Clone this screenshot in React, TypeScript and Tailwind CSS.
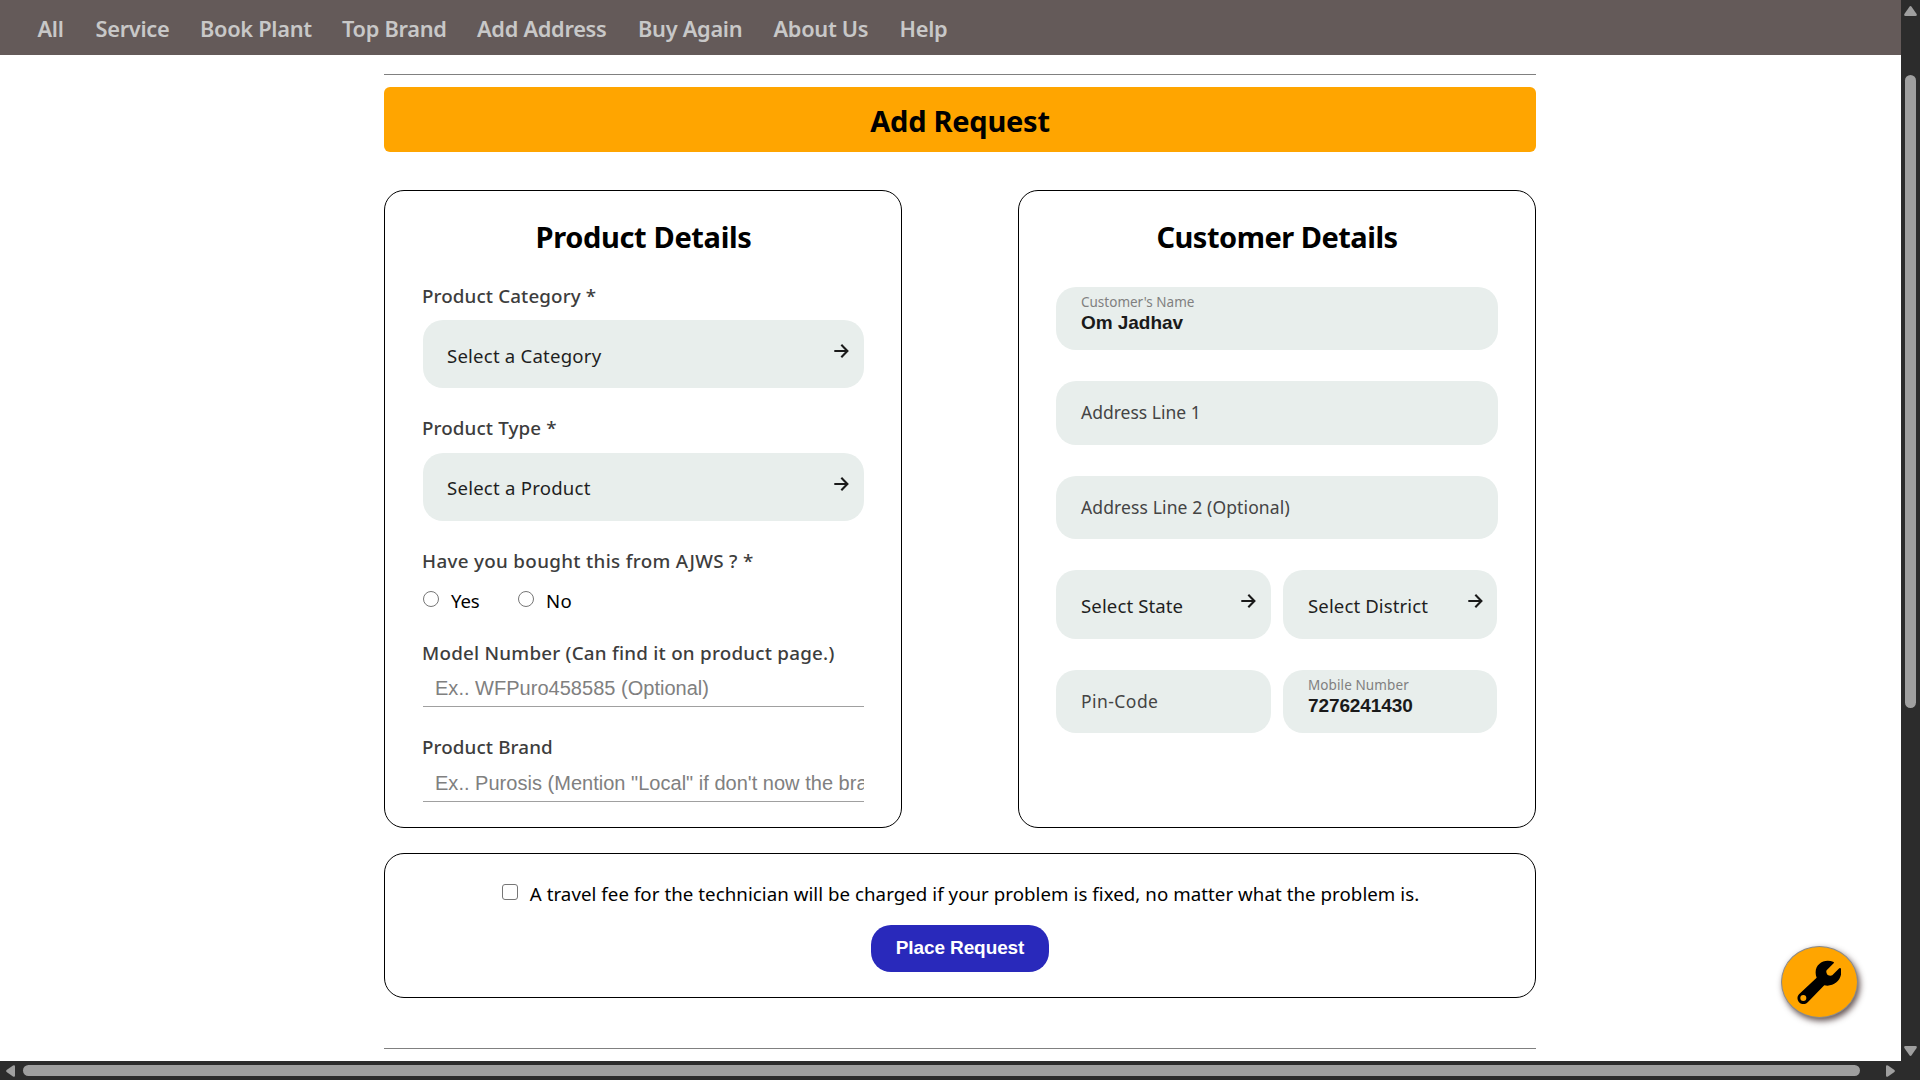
import type { ReactNode } from "react";

const navItems = [
  { label: "All", width: "w-[58px]" },
  { label: "Service", width: "w-[104.5px]" },
  { label: "Book Plant", width: "w-[142px]" },
  { label: "Top Brand", width: "w-[135px]" },
  { label: "Add Address", width: "w-[161px]" },
  { label: "Buy Again", width: "w-[135.5px]" },
  { label: "About Us", width: "w-[126px]" },
  { label: "Help", width: "w-[60px]" },
];

function ArrowRight({ className = "" }: { className?: string }) {
  return (
    <svg className={`h-[14px] w-[15px] shrink-0 ${className}`} viewBox="0 0 15 14" fill="none" stroke="#1a1a1a" strokeWidth="2.1">
      <path d="M0.3 7H13.2M7.3 0.8L13.4 7L7.3 13.2" />
    </svg>
  );
}

function Wrench({ className = "" }: { className?: string }) {
  return (
    <svg className={className} viewBox="80 74 134 134" fill="currentColor" fillRule="evenodd">
      <path d="M190 80C165 68 135 84 136 112Q136 120 139 127L86 177C76 188 83 206 100 207Q108 206 113 200L162 150C190 156 216 135 213 104Q212 96 207 99L186 120Q180 123 172 119Q166 112 169 105L190 84Q192 82 190 80ZM99 179A9 9 0 1 0 99 197A9 9 0 1 0 99 179Z" />
    </svg>
  );
}

function Label({ children, className = "" }: { children: ReactNode; className?: string }) {
  return <div className={`-ml-px h-7 text-[18.8px] leading-7 font-medium whitespace-nowrap text-[#3d3d3d] ${className}`}>{children}</div>;
}

function SelectBox({ children, className = "", textClass = "" }: { children: ReactNode; className?: string; textClass?: string }) {
  return (
    <div className={`flex items-center justify-between rounded-[20px] bg-[#e8eeec] pl-6 ${className}`}>
      <span className={`text-[18.6px] leading-7 whitespace-nowrap text-[#1f1f1f] ${textClass}`}>{children}</span>
      <ArrowRight className="mb-[7px]" />
    </div>
  );
}

function FilledField({ label, value, valueClass, labelClass, className = "" }: { label: string; value: string; valueClass: string; labelClass: string; className?: string }) {
  return (
    <div className={`h-[63px] rounded-[20px] bg-[#e8eeec] pt-1.5 pl-[25px] ${className}`}>
      <div className={`text-[13.5px] leading-[18px] text-[#808080] ${labelClass}`}>{label}</div>
      <div className={`mt-0.5 font-['Liberation_Sans',Arial,sans-serif] text-[19px] leading-5 font-bold text-[#1a1a1a] ${valueClass}`}>{value}</div>
    </div>
  );
}

function EmptyField({ children, className = "" }: { children: ReactNode; className?: string }) {
  return <div className={`flex items-center rounded-[20px] bg-[#e8eeec] pb-[2px] pl-[25px] text-[17.5px] leading-6 text-[#444] ${className}`}>{children}</div>;
}

function LineField({ children, className = "" }: { children: ReactNode; className?: string }) {
  return (
    <div className={`h-[37px] overflow-hidden border-b border-[#a0a0a0] pl-3 font-['Liberation_Sans',Arial,sans-serif] text-[20px] leading-9 whitespace-nowrap text-[#808080] ${className}`}>
      {children}
    </div>
  );
}

function ProductDetails() {
  return (
    <section className="h-[638px] w-[518px] rounded-[20px] border border-black pt-7 pr-[37px] pl-[38px]">
      <h2 className="text-center text-[29px] leading-9 font-bold tracking-[-0.35px]">Product Details</h2>
      <Label className="mt-[27px] tracking-[0.12px]">Product Category *</Label>
      <SelectBox className="mt-2.5 h-[68px] pr-[15px]" textClass="mt-1 tracking-[0.2px]">Select a Category</SelectBox>
      <Label className="mt-[26px] tracking-[0.12px]">Product Type *</Label>
      <SelectBox className="mt-[11px] h-[68px] pr-[15px]" textClass="mt-0.5 tracking-[0.22px]">Select a Product</SelectBox>
      <Label className="mt-[26px] tracking-[0.33px]">Have you bought this from AJWS ? *</Label>
      <div className="mt-3 flex h-7 items-start text-[18.6px] leading-7 tracking-[-0.15px]">
        <span className="mt-1 size-4 rounded-full border border-[#767676]" />
        <span className="ml-3 w-[67px]">Yes</span>
        <span className="mt-1 size-4 rounded-full border border-[#767676]" />
        <span className="ml-3 tracking-[0.3px]">No</span>
      </div>
      <Label className="mt-6 tracking-[0.24px]">Model Number (Can find it on product page.)</Label>
      <LineField className="mt-[3px] tracking-[0.02px]">Ex.. WFPuro458585 (Optional)</LineField>
      <Label className="mt-[26px] tracking-[0.12px]">Product Brand</Label>
      <LineField className="mt-1 tracking-[0.02px]">Ex.. Purosis (Mention &quot;Local&quot; if don&apos;t now the brand)</LineField>
    </section>
  );
}

function CustomerDetails() {
  return (
    <section className="h-[638px] w-[518px] rounded-[20px] border border-black px-[37px] pt-7">
      <h2 className="text-center text-[29px] leading-9 font-bold tracking-[-0.5px]">Customer Details</h2>
      <FilledField className="mt-8" label="Customer's Name" labelClass="" value="Om Jadhav" valueClass="tracking-[-0.05px]" />
      <EmptyField className="mt-[31px] h-16">Address Line 1</EmptyField>
      <EmptyField className="mt-[31px] h-[63px] tracking-[0.12px]">Address Line 2 (Optional)</EmptyField>
      <div className="mt-[31px] flex gap-3">
        <SelectBox className="h-[69px] w-[215px] pr-[15px]" textClass="mt-0.5 ml-px tracking-[0.1px]">Select State</SelectBox>
        <SelectBox className="h-[69px] w-[214px] pr-[14px]" textClass="mt-0.5 ml-px tracking-[0.1px]">Select District</SelectBox>
      </div>
      <div className="mt-[31px] flex gap-3">
        <EmptyField className="h-[63px] w-[215px] tracking-[0.45px]">Pin-Code</EmptyField>
        <FilledField className="w-[214px]" label="Mobile Number" labelClass="tracking-[0.1px]" value="7276241430" valueClass="tracking-[-0.1px]" />
      </div>
    </section>
  );
}

export default function App() {
  return (
    <div className="grid h-[1080px] w-[1920px] grid-cols-[1901px_19px] grid-rows-[1061px_19px] overflow-hidden bg-[#2c2c2c] font-['Noto_Sans','Segoe_UI',sans-serif] text-black">
      <div className="relative overflow-hidden bg-white">
        <nav className="flex h-[55px] items-center bg-[#645a59] pl-[37.5px] text-[21.8px] leading-8 font-semibold tracking-[-0.3px] whitespace-nowrap text-[#c8c8c8]">
          {navItems.map((item) => (
            <a key={item.label} className={`mt-[3px] ${item.width}`}>{item.label}</a>
          ))}
        </nav>
        <main className="ml-[384px] flex w-[1152px] flex-col">
          <hr className="mt-[19px] h-px border-0 bg-[#808080]" />
          <h1 className="mt-3 flex h-[65px] items-center justify-center rounded-[6px] bg-[#ffa500] pt-[2px] text-[29px] leading-9 font-bold tracking-[-0.25px]">Add Request</h1>
          <div className="mt-[38px] flex justify-between">
            <ProductDetails />
            <CustomerDetails />
          </div>
          <section className="mt-[25px] flex h-[145px] flex-col items-center rounded-[20px] border border-black pt-[26px]">
            <div className="ml-px flex h-7 items-start text-[18.7px] leading-7 tracking-[0.05px] whitespace-nowrap">
              <span className="mt-1 mr-3 size-4 rounded-[3px] border border-[#767676]" />
              A travel fee for the technician will be charged if your problem is fixed, no matter what the problem is.
            </div>
            <button className="mt-[17px] h-[47px] w-[178px] rounded-[20px] bg-[#2929bb] pb-[2px] font-['Liberation_Sans',Arial,sans-serif] text-[19px] leading-6 font-bold tracking-[-0.1px] text-white">
              Place Request
            </button>
          </section>
          <hr className="mt-[50px] h-px border-0 bg-[#808080]" />
        </main>
        <button className="absolute top-[946px] left-[1781px] flex h-[72px] w-[77px] items-center justify-center rounded-[50%] border border-[#8a8a8a] bg-[#ffa500] shadow-[2px_3px_6px_rgba(60,40,40,0.8)]">
          <Wrench className="mr-px size-[44.6px]" />
        </button>
      </div>
      <div className="flex flex-col items-center">
        <svg className="mt-1.5 h-2.5 w-[13px]" viewBox="0 0 13 10" fill="#9f9f9f">
          <path d="M5.4 0.8Q6.5-0.6 7.6 0.8L12.6 8Q13.4 9.8 11.5 10H1.5Q-0.4 9.8 0.4 8Z" />
        </svg>
        <div className="mt-[59px] h-[633px] w-[11px] rounded-full bg-[#9f9f9f]" />
        <svg className="mt-[338px] h-2.5 w-[13px]" viewBox="0 0 13 10" fill="#9f9f9f">
          <path d="M5.4 9.2Q6.5 10.6 7.6 9.2L12.6 2Q13.4 0.2 11.5 0H1.5Q-0.4 0.2 0.4 2Z" />
        </svg>
      </div>
      <div className="flex items-center">
        <svg className="ml-1.5 h-3 w-[9px]" viewBox="0 0 9 12" fill="#9f9f9f">
          <path d="M0.6 7Q-0.4 6 0.6 5L7 0.4Q9-0.4 9 1.3V10.7Q9 12.4 7 11.6Z" />
        </svg>
        <div className="ml-2 h-[11px] w-[1837px] rounded-full bg-[#9f9f9f]" />
        <svg className="ml-[26px] h-3 w-[9px]" viewBox="0 0 9 12" fill="#9f9f9f">
          <path d="M8.4 7Q9.4 6 8.4 5L2 0.4Q0-0.4 0 1.3V10.7Q0 12.4 2 11.6Z" />
        </svg>
      </div>
    </div>
  );
}
